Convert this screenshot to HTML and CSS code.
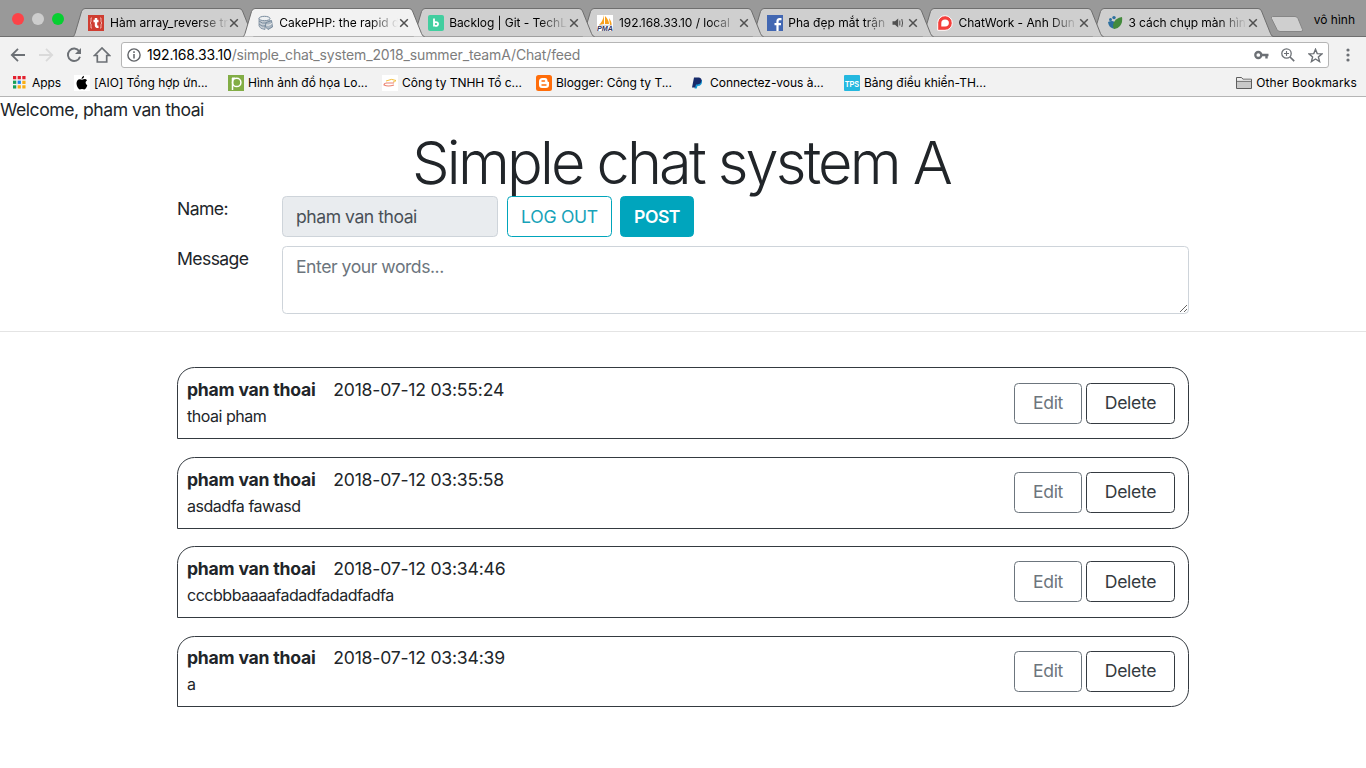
FILE: index.html
```html
<!DOCTYPE html>
<html lang="vi">
<head>
<meta charset="utf-8">
<title>Simple chat system A</title>
<link rel="stylesheet" href="styles.css">
</head>
<body>
<svg class="defs" width="0" height="0">
  <defs>
    <symbol id="tab-shape" viewBox="0 0 182 29"><path d="M0.5 28.5 C1 28 1.6 26.5 2 25.500L8.500 3.500Q9.500.5 12 .5H166Q168.500.5 169.500 3L178.500 25.500Q179.500 28.500 181.500 28.500"/></symbol>
    <symbol id="close" viewBox="0 0 10 10"><path d="M1.200 1.200L8.800 8.800M8.800 1.200L1.200 8.800" stroke="#505050" stroke-width="1.500" fill="none"/></symbol>
  </defs>
</svg>
<header class="browser">
  <div class="tabstrip">
    <div class="lights"><i class="red"></i><i class="grey"></i><i class="green"></i></div>
    <div class="tabs">
      <div class="tab t1"><svg class="shape"><use href="#tab-shape"/></svg>
        <svg class="fav" viewBox="0 0 16 16"><rect width="16" height="16" fill="#cf3d31"/><path d="M4 3H3V7L2 8L3 9V13H4M12 3H13V7L14 8L13 9V13H12" stroke="#efb0aa" fill="none"/><path d="M8 3V10.500Q8 12 10.500 11.700M5.500 6H10.500" stroke="#fff" stroke-width="2.400" fill="none"/></svg>
        <span class="title">Hàm array_reverse tr</span><svg class="x"><use href="#close"/></svg></div>
      <div class="tab t2 active"><svg class="shape"><use href="#tab-shape"/></svg>
        <svg class="fav" viewBox="0 0 16 16"><path d="M1 3.500V11Q2 14 7 14.500V10L12 12V5" fill="#c6cdd4" stroke="#788b9d" stroke-width=".8"/><ellipse cx="6.500" cy="3.500" rx="5.500" ry="2.200" fill="#edf0f2" stroke="#788b9d"/><path d="M1 6Q4 9 8 8M1 9Q4 12 7 11" stroke="#788b9d" fill="none"/><path d="M8 7.500L13.500 5.500L14.500 12L10 14.500L7.500 12Z" fill="#aab6c1" stroke="#647b91" stroke-width=".8"/><path d="M8 10Q11 11 14 8.500" stroke="#f4f4f4" fill="none"/></svg>
        <span class="title">CakePHP: the rapid d</span><svg class="x"><use href="#close"/></svg></div>
      <div class="tab t3"><svg class="shape"><use href="#tab-shape"/></svg>
        <svg class="fav" viewBox="0 0 16 16"><rect width="16" height="16" rx="2" fill="#42ce9f"/><path d="M6 3.500V11.500M6 8A2.200 1.900 0 1 1 6 10" stroke="#fff" stroke-width="1.800" fill="none"/></svg>
        <span class="title">Backlog | Git - TechL</span><svg class="x"><use href="#close"/></svg></div>
      <div class="tab t4"><svg class="shape"><use href="#tab-shape"/></svg>
        <svg class="fav" viewBox="0 0 16 16"><rect width="16" height="16" fill="#fff"/><path d="M7 0V9L2 10Q6 6 7 0ZM8 1Q12 5 12 9H8ZM12 3Q15 7 14.500 10H13Z" fill="#f8a01c"/><path d="M2 10.300H15" stroke="#bbb" stroke-width=".7"/><text x="0" y="16" font-size="6.500" font-style="italic" font-weight="700" textLength="16" lengthAdjust="spacingAndGlyphs" letter-spacing="0" fill="#33335d" font-family="Liberation Sans,sans-serif">PMA</text></svg>
        <span class="title">192.168.33.10 / local</span><svg class="x"><use href="#close"/></svg></div>
      <div class="tab t5"><svg class="shape"><use href="#tab-shape"/></svg>
        <svg class="fav" viewBox="0 0 16 16"><rect width="16" height="16" fill="#4267b2"/><path d="M10.500 16V6.500Q10.500 4.200 12.500 4.200H14.500M7.500 9.200H14" stroke="#fff" stroke-width="2.200" fill="none"/></svg>
        <span class="title short">Pha đẹp mắt trận</span>
        <svg class="audio" viewBox="0 0 12 10"><path d="M.5 3.200H3L6.200.5V9.500L3 6.800H.5Z" fill="#505050"/><path d="M7.800 2.500V7.500M9.800 1Q11.300 5 9.800 9" stroke="#505050" fill="none"/></svg>
        <svg class="x"><use href="#close"/></svg></div>
      <div class="tab t6"><svg class="shape"><use href="#tab-shape"/></svg>
        <svg class="fav" viewBox="0 0 16 16"><path d="M.7 15.300V7.700A7.300 7.300 0 1 1 8 15.300Z" fill="#f43f3b" stroke="#fff" stroke-width="1"/><path d="M4.300 11.500V8A3.800 3.500 0 1 1 8 11.500Z" fill="#fff"/></svg>
        <span class="title">ChatWork - Anh Dun</span><svg class="x"><use href="#close"/></svg></div>
      <div class="tab t7"><svg class="shape"><use href="#tab-shape"/></svg>
        <svg class="fav" viewBox="0 0 16 16"><circle cx="7" cy="2.600" r="1.700" fill="#2c6f9f"/><circle cx="3.500" cy="4.500" r="1.500" fill="#2c6f9f"/><path d="M1 7Q7 4 8.500 9Q8 12 6 13.500Q1.500 12 1 7Z" fill="#2c6f9f"/><path d="M6.500 14Q5 8 9 4.500Q12 2 15 2Q16 7 13 11Q10 14.500 6.500 14Z" fill="#438a3c"/></svg>
        <span class="title">3 cách chụp màn hìn</span><svg class="x"><use href="#close"/></svg></div>
    </div>
    <svg class="newtab" viewBox="0 0 34 18"><path d="M2.500 1.500H25Q27 1.500 28 3.500L32.500 14.500Q33 16.500 31 16.500H10Q8 16.500 7 14.500L1.500 3.500Q1 1.500 2.500 1.500Z" fill="#cfcfcf" stroke="#868686"/></svg>
    <span class="profile">vô hình</span>
  </div>
  <div class="toolbar">
    <svg class="nav back" viewBox="0 0 16 16"><path d="M15 8H2M8 1.800L1.800 8L8 14.200" stroke="#6c7075" stroke-width="1.800" fill="none"/></svg>
    <svg class="nav fwd" viewBox="0 0 16 16"><path d="M1 8H14M8 1.800L14.200 8L8 14.200" stroke="#dadada" stroke-width="1.800" fill="none"/></svg>
    <svg class="nav reload" viewBox="0 0 16 16"><path d="M13.200 4.200A6.200 6.200 0 1 0 14 9.700" stroke="#6c7075" stroke-width="1.900" fill="none"/><path d="M15 1V7H9Z" fill="#6c7075"/></svg>
    <svg class="nav home" viewBox="0 0 18 16"><path d="M1.500 8.500L9 1L16.500 8.500H13.700V15H4.300V8.500Z" stroke="#6c7075" stroke-width="1.700" fill="none"/></svg>
    <div class="omnibox">
      <svg class="info" viewBox="0 0 14 14"><circle cx="7" cy="7" r="6.100" stroke="#606367" stroke-width="1.400" fill="none"/><path d="M7 6V10.500M7 3.300V4.900" stroke="#606367" stroke-width="1.500"/></svg>
      <span class="url"><b>192.168.33.10</b><span class="path">/simple_chat_system_2018_summer_teamA/Chat/feed</span></span>
      <svg class="key" viewBox="0 0 15 10"><circle cx="4.300" cy="5" r="3" stroke="#6c7075" stroke-width="2.300" fill="none"/><path d="M7 5H14.500M12.500 5V8.500" stroke="#6c7075" stroke-width="2.400"/></svg>
      <svg class="zoom" viewBox="0 0 14 14"><circle cx="5.500" cy="5.500" r="4.700" stroke="#6c7075" stroke-width="1.300" fill="none"/><path d="M3 5.500H8M5.500 3V8" stroke="#6c7075" stroke-width="1.100"/><path d="M9 9L13.200 13.200" stroke="#6c7075" stroke-width="1.700"/></svg>
      <svg class="star" viewBox="0 0 14 14"><path d="M7 1.200L8.600 5.200L13 5.500L9.700 8.300L10.800 12.700L7 10.300L3.200 12.700L4.300 8.300L1 5.500L5.400 5.200Z" stroke="#6c7075" stroke-width="1.300" fill="none"/></svg>
    </div>
    <svg class="menu" viewBox="0 0 4 14"><circle cx="2" cy="2" r="1.600"/><circle cx="2" cy="7" r="1.600"/><circle cx="2" cy="12" r="1.600"/></svg>
  </div>
  <nav class="bookmarks">
    <a class="bm b1"><svg viewBox="0 0 14 14"><path d="M0 0h3.500v3.500H0zM5 0h3.500v3.500H5zM10 0h3.500v3.500H10z" fill="#e3202e"/><path d="M0 5h3.500v3.500H0z" fill="#16a05a"/><path d="M5 5h3.500v3.500H5z" fill="#1a84f0"/><path d="M10 5h3.500v3.500H10zM5 10h3.500v3.500H5zM10 10h3.500v3.500H10z" fill="#f9ad12"/><path d="M0 10h3.500v3.500H0z" fill="#16a05a"/></svg><span>Apps</span></a>
    <a class="bm b2"><svg viewBox="0 0 16 16"><rect width="16" height="16" fill="#fff"/><path d="M8 4.700Q12 3 13 5.500Q10 7.500 13.300 10.500Q11.500 15 9.500 14.300Q8 13.600 6.500 14.300C4.500 15 2.500 11 2.500 8Q3 4 6 4.200ZM7.500 4Q7.500 1.500 10 .8Q10.200 3.500 7.500 4Z" fill="#000"/></svg><span>[AIO] Tổng hợp ứn...</span></a>
    <a class="bm b3"><svg viewBox="0 0 16 16"><rect width="16" height="16" fill="#82ad45"/><path d="M4.500 15V3M4 3.200H7" stroke="#fff" stroke-width="1.500"/><circle cx="8.700" cy="7.400" r="4.200" stroke="#fff" stroke-width="1.500" fill="none"/></svg><span>Hình ảnh đồ họa Lo...</span></a>
    <a class="bm b4"><svg viewBox="0 0 16 16"><rect width="16" height="16" fill="#fff"/><path d="M4 6Q10 3 14 5.500Q13 7 11 7" stroke="#f3bd38" stroke-width="1" fill="none"/><path d="M12 10Q6 12 2 10Q2 8 5 8M4 8H12" stroke="#ec8270" stroke-width="1.100" fill="none"/></svg><span>Công ty TNHH Tổ c...</span></a>
    <a class="bm b5"><svg viewBox="0 0 16 16"><rect width="16" height="16" rx="2.500" fill="#ff6d0a"/><path d="M6.500 3H9Q11.500 3 11.500 6Q11.500 7 13 7V10Q13 13 10 13H6Q3 13 3 10V6.500Q3 3 6.500 3Z" fill="#fff"/><path d="M6 6H8.500M6 10H10" stroke="#ff6d0a" stroke-width="1.400" stroke-linecap="round"/></svg><span>Blogger: Công ty T...</span></a>
    <a class="bm b6"><svg viewBox="0 0 16 16"><path d="M6 5H12Q12.500 11 7.500 11L6.700 13.500H4.500Z" fill="#179bd7"/><path d="M4 2.500H9Q12 3 11.500 6Q11 9 7.500 9.500H6L5.200 12.500H2Z" fill="#172b6b"/></svg><span>Connectez-vous à...</span></a>
    <a class="bm b7"><svg viewBox="0 0 16 16"><rect width="16" height="16" rx="1" fill="#25b8df"/><text x="1" y="12" font-size="9.500" font-weight="700" textLength="14" lengthAdjust="spacingAndGlyphs" letter-spacing="0" fill="#fff" font-family="Liberation Sans,sans-serif">TPS</text></svg><span>Bảng điều khiển-TH...</span></a>
    <a class="bm other"><svg viewBox="0 0 16 14"><path d="M.5 12.500V1.500H5.500L7 3.200H15.500V12.500ZM.5 5.200H15.500" fill="#c9c9c9" stroke="#5e5e5e"/><path d="M1 2H5.200L6.800 3.700H15V4.700H1Z" fill="#eee"/></svg><span>Other Bookmarks</span></a>
  </nav>
</header>
<main class="page">
  <p class="welcome"><span>Welcome, pham van thoai</span></p>
  <h1>Simple chat system A</h1>
  <form class="compose">
    <div class="row"><label>Name:</label><input class="control name" value="pham van thoai" readonly><button type="button" class="btn logout">LOG OUT</button><button type="button" class="btn post">POST</button></div>
    <div class="row msg"><label>Message</label><textarea class="control" placeholder="Enter your words..."></textarea></div>
  </form>
  <hr>
  <section class="feed">
    <article class="card"><div><p class="meta"><strong>pham van thoai</strong><time>2018-07-12 03:55:24</time></p><p class="text">thoai pham</p></div><div class="actions"><button class="btn edit">Edit</button><button class="btn delete">Delete</button></div></article>
    <article class="card"><div><p class="meta"><strong>pham van thoai</strong><time>2018-07-12 03:35:58</time></p><p class="text">asdadfa fawasd</p></div><div class="actions"><button class="btn edit">Edit</button><button class="btn delete">Delete</button></div></article>
    <article class="card"><div><p class="meta"><strong>pham van thoai</strong><time>2018-07-12 03:34:46</time></p><p class="text">cccbbbaaaafadadfadadfadfa</p></div><div class="actions"><button class="btn edit">Edit</button><button class="btn delete">Delete</button></div></article>
    <article class="card"><div><p class="meta"><strong>pham van thoai</strong><time>2018-07-12 03:34:39</time></p><p class="text">a</p></div><div class="actions"><button class="btn edit">Edit</button><button class="btn delete">Delete</button></div></article>
  </section>
</main>
</body>
</html>
```
FILE: styles.css
```css
* { box-sizing: border-box; }
body { margin: 0; height: 768px; overflow: hidden; background: #fff; color: #212529; font: 17.6px/26.4px Inter, "Noto Sans", sans-serif; }
p, h1 { margin: 0; }
.defs { position: absolute; }

/* browser chrome */
.browser { height: 97px; background: #f2f2f2; border-bottom: 1px solid #b5b5b5; color: #000; font-size: 12px; line-height: 16px; }
.tabstrip { display: flex; height: 37px; background: linear-gradient(#999 36px, #6f6f6f 36px); }
.lights { display: flex; gap: 8px; width: 73px; padding: 13px 0 0 12px; flex: none; }
.lights i { width: 12px; height: 12px; border-radius: 50%; }
.red { background: #fc4348; }
.grey { background: #cdcdcd; }
.green { background: #06cf31; }
.tabs { display: flex; padding-top: 8px; flex: none; position: relative; }
.tab { position: relative; display: flex; align-items: center; width: 181px; height: 29px; padding: 1px 0 0 15px; margin-right: -11.2px; }
.tab > * { position: relative; flex: none; }
.tab .shape { position: absolute; left: 0; top: 0; width: 182px; height: 29px; fill: #cfcfcf; stroke: #6f6f6f; }
.active .shape { fill: #f2f2f2; }
.t1 { z-index: 7; } .t2 { z-index: 9; } .t3 { z-index: 6; } .t4 { z-index: 5; } .t5 { z-index: 4; } .t6 { z-index: 3; } .t7 { z-index: 2; margin-right: 0; }
.fav { width: 16px; height: 16px; }
.title { width: 118px; margin-left: 6px; padding-bottom: 1px; white-space: nowrap; mask-image: linear-gradient(90deg, #000 90px, transparent 119px); }
.t2 .title, .t3 .title, .t4 .title, .t6 .title, .t7 .title { width: 119px; margin-left: 5.5px; letter-spacing: -.05px; }
.title.short { width: 98px; margin-left: 5px; mask-image: linear-gradient(90deg, #000 76px, transparent 104px); }
.audio { width: 12px; height: 10px; margin: 0 0 0 6px; }
.tab .x { width: 10px; height: 10px; margin-left: 1px; }
.tab .audio + .x { margin-left: 4px; }
.newtab { width: 34px; height: 18px; margin: 15px 0 0 -3px; flex: none; }
.profile { margin: 12px 11px 0 auto; white-space: nowrap; }

.toolbar { display: flex; align-items: center; height: 33px; padding: 3px 0 0 10px; }
.nav { width: 16px; height: 16px; flex: none; }
.fwd { margin-left: 12px; }
.reload { margin-left: 12px; }
.home { width: 18px; margin-left: 11px; }
.omnibox { display: flex; align-items: center; width: 1208px; height: 26px; margin-left: 10px; padding-left: 5px; border: 1px solid #b5b5b5; border-radius: 3px; background: #fff; flex: none; }
.info { width: 14px; height: 14px; }
.url { margin-left: 6px; font-size: 14px; flex: 1; letter-spacing: -.14px; }
.url b { font-weight: 400; }
.path { color: #7d7d7d; }
.key { width: 15px; height: 10px; }
.zoom { width: 14px; height: 14px; margin-left: 12px; }
.star { width: 15px; height: 15px; margin: 0 5px 0 13px; }
.menu { width: 4px; height: 14px; margin-left: 17px; fill: #6c7075; }

.bookmarks { display: flex; height: 25px; align-items: center; padding-left: 13px; }
.bm { display: flex; align-items: center; gap: 5px; flex: none; white-space: nowrap; letter-spacing: -.04px; }
.bm svg { width: 16px; height: 16px; flex: none; }
.b1 { width: 61px; gap: 6px; }
.b1 svg { width: 13px; height: 13px; }
.b2, .b3, .b4, .b5, .b6 { width: 154px; gap: 4px; }
.b7 { gap: 4px; }
.bm.other { margin: 0 9px 0 auto; gap: 4px; letter-spacing: .13px; }
.other svg { height: 14px; }

/* page */
.welcome { height: 29px; letter-spacing: -.47px; }
h1 { height: 70px; padding-right: 4px; text-align: center; font-size: 59.5px; line-height: 72px; font-weight: 350; letter-spacing: -2.850px; }
.compose { width: 1012px; margin: 0 auto; }
.row { display: flex; }
.row.msg { margin-top: 9px; }
label { width: 105px; flex: none; letter-spacing: -.6px; }
.control { font: inherit; color: #495057; border: 1px solid #ced4da; border-radius: 4.4px; padding: 6.600px 13px; outline: 0; letter-spacing: -.47px; }
.name { width: 216px; height: 41px; background: #e9ecef; }
textarea.control { display: block; width: 907px; height: 68px; resize: vertical; }
.control::placeholder { color: #6c757d; opacity: 1; }
.btn { display: flex; align-items: center; justify-content: center; height: 41px; padding: 0; font: inherit; border: 1px solid; border-radius: 4.4px; background: none; letter-spacing: -.3px; }
.logout { width: 105px; margin-left: 9px; padding-top: 1px; color: #17a2b8; border-color: #00a5bb; }
.post { width: 74px; margin-left: 8px; padding-top: 1px; background: #00a5bd; border-color: #00a5bd; color: #fff; font-weight: 600; letter-spacing: -.5px; }
hr { margin: 17px 0 0; border: 0; border-top: 1px solid #e4e4e4; }
.feed { width: 1012px; margin: 35.400px auto 0; display: grid; gap: 17.600px; }
.card { display: flex; justify-content: space-between; height: 71.8px; padding: 8.800px 13px 0 9px; border: 1px solid #343a40; border-radius: 17.6px 17.6px 17.6px 0; }
.meta { display: flex; gap: 17.800px; height: 26px; letter-spacing: -.22px; }
.text { font-size: 16px; letter-spacing: -.47px; }
.actions { display: flex; gap: 4px; padding-top: 5.400px; }
.edit { width: 68px; color: #6c757d; border-color: #6c757d; }
.delete { width: 89px; color: #343a40; border-color: #343a40; }
```
